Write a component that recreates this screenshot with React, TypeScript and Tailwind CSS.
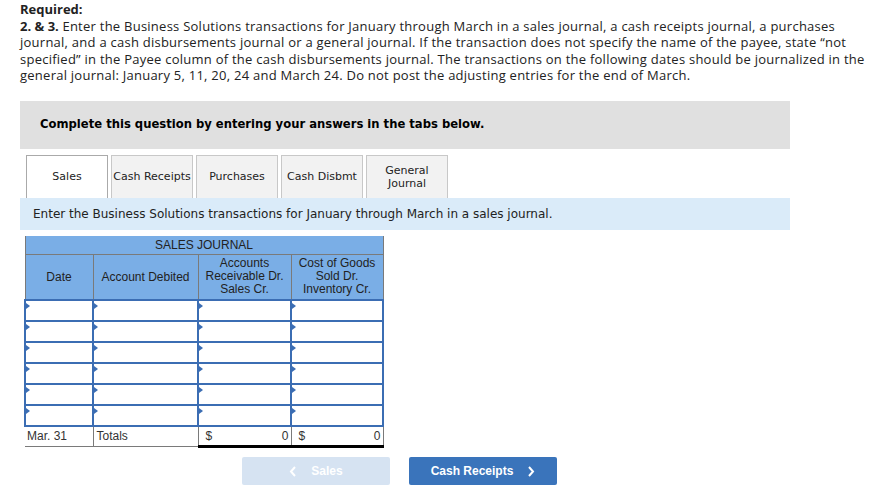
import React from 'react';

const tabs = ['Sales', 'Cash Receipts', 'Purchases', 'Cash Disbmt', 'General Journal'];

const InputCell = ({ w }: { w: string }) => (
  <td className={`relative h-[21px] border-2 border-[#3b6db3] bg-white p-0 ${w}`}>
    <span className="absolute left-0 top-[2px] h-0 w-0 border-y-[3px] border-l-[4px] border-y-transparent border-l-[#3b6db3]" />
  </td>
);

const Chevron = ({ dir }: { dir: 'left' | 'right' }) => (
  <svg width="8" height="11" viewBox="0 0 8 11" fill="none" stroke="currentColor" strokeWidth="2">
    {dir === 'left' ? <path d="M6 1 L2 5.5 L6 10" /> : <path d="M2 1 L6 5.5 L2 10" />}
  </svg>
);

const App = () => {
  return (
    <div className="w-[870px] h-[503px] bg-white overflow-hidden">
      {/* Instructions */}
      <div className="pl-[20px] pt-[1px] text-[13px] leading-[16.5px] tracking-[0.25px] text-[#222]" style={{ fontFamily: '"Open Sans", sans-serif' }}>
        <div className="font-bold tracking-normal">Required:</div>
        <div className="whitespace-nowrap"><span className="font-bold tracking-normal">2. &amp; 3.</span> Enter the Business Solutions transactions for January through March in a sales journal, a cash receipts journal, a purchases</div>
        <div className="whitespace-nowrap">journal, and a cash disbursements journal or a general journal. If the transaction does not specify the name of the payee, state “not</div>
        <div className="whitespace-nowrap">specified” in the Payee column of the cash disbursements journal. The transactions on the following dates should be journalized in the</div>
        <div className="whitespace-nowrap">general journal: January 5, 11, 20, 24 and March 24. Do not post the adjusting entries for the end of March.</div>
      </div>

      <div className="ml-[20px] mt-[17px] w-[770px]" style={{ fontFamily: '"DejaVu Sans", Verdana, sans-serif' }}>
        {/* Banner */}
        <div className="h-[48px] bg-[#e0e0e0] flex items-center pl-[20px] text-[11.6px] font-bold text-black">
          Complete this question by entering your answers in the tabs below.
        </div>

        {/* Tabs */}
        <div className="mt-[6px] ml-[6px] flex gap-[3px]">
          {tabs.map((t, i) => (
            <div
              key={t}
              className={`h-[43px] w-[82px] flex items-center justify-center text-center text-[11px] leading-[13px] text-[#222] border border-b-0 ${
                i === 0 ? 'bg-white border-[#aaa]' : 'bg-[#f2f2f2] border-[#c8c8c8]'
              }`}
            >
              {t === 'General Journal' ? (
                <span>General<br />Journal</span>
              ) : (
                t
              )}
            </div>
          ))}
        </div>

        {/* Instruction band */}
        <div className="h-[32px] bg-[#daebf9] flex items-center pl-[13px] text-[12px] text-[#222]">
          Enter the Business Solutions transactions for January through March in a sales journal.
        </div>
      </div>

      {/* Sales journal table */}
      <div className="ml-[24px] mt-[6px]" style={{ fontFamily: '"Liberation Sans", Arial, sans-serif' }}>
        <table className="border-collapse text-[12px] text-[#222]">
          <thead>
            <tr>
              <th colSpan={4} className="h-[19px] bg-[#7aaee6] border border-[#7a7a7a] border-t-0 font-normal p-0 leading-[18px]">
                SALES JOURNAL
              </th>
            </tr>
            <tr className="bg-[#7aaee6]">
              <th className="w-[68px] h-[45px] border border-[#7a7a7a] font-normal p-0">Date</th>
              <th className="w-[105px] border border-[#7a7a7a] font-normal p-0 whitespace-nowrap">Account Debited</th>
              <th className="w-[93px] border border-[#7a7a7a] font-normal p-0 leading-[13px]">Accounts<br />Receivable Dr.<br />Sales Cr.</th>
              <th className="w-[92px] border border-[#7a7a7a] font-normal p-0 leading-[13px]">Cost of Goods<br />Sold Dr.<br />Inventory Cr.</th>
            </tr>
          </thead>
          <tbody>
            {[0, 1, 2, 3, 4, 5].map((r) => (
              <tr key={r}>
                <InputCell w="w-[68px]" />
                <InputCell w="w-[105px]" />
                <InputCell w="w-[93px]" />
                <InputCell w="w-[92px]" />
              </tr>
            ))}
            <tr className="h-[21px] text-[#333]">
              <td className="border-b border-r border-[#7a7a7a] pl-[2px] p-0">Mar. 31</td>
              <td className="border-b border-r border-[#7a7a7a] pl-[3px] p-0">Totals</td>
              <td className="border-r border-[#7a7a7a] border-b-[3px] border-b-black border-t border-t-black p-0 px-[7px]">
                <div className="flex justify-between"><span>$</span><span className="-mr-[5px]">0</span></div>
              </td>
              <td className="border-r border-[#7a7a7a] border-b-[3px] border-b-black border-t border-t-black p-0 px-[7px]">
                <div className="flex justify-between"><span>$</span><span className="-mr-[5px]">0</span></div>
              </td>
            </tr>
          </tbody>
        </table>
      </div>

      {/* Navigation buttons */}
      <div className="mt-[9px] ml-[242px] flex gap-[19px]" style={{ fontFamily: '"Liberation Sans", Arial, sans-serif' }}>
        <button className="w-[148px] h-[28px] rounded-[2px] bg-[#d6e3f2] text-white text-[12px] font-bold flex items-center justify-center gap-[14px]">
          <Chevron dir="left" />
          <span>Sales</span>
        </button>
        <button className="w-[148px] h-[28px] rounded-[2px] bg-[#3a74bb] text-white text-[12px] font-bold flex items-center justify-center gap-[14px]">
          <span>Cash Receipts</span>
          <Chevron dir="right" />
        </button>
      </div>
    </div>
  );
};

export default App;
